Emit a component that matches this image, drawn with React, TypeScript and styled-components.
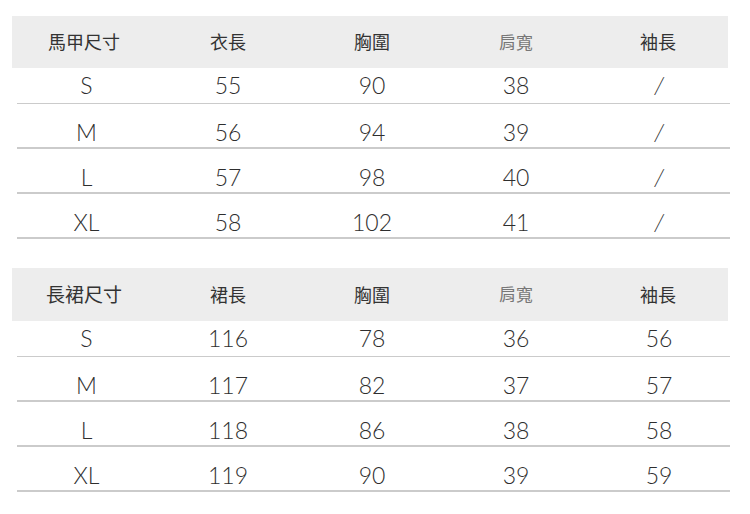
import styled, { createGlobalStyle } from "styled-components";

const GlobalStyle = createGlobalStyle`
  body {
    margin: 0;
    background: #ffffff;
  }
`;

type Table = {
  title: string;
  headers: string[];
  rows: string[][];
};

const tables: Table[] = [
  {
    title: "馬甲尺寸",
    headers: ["衣長", "胸圍", "肩寬", "袖長"],
    rows: [
      ["S", "55", "90", "38", "/"],
      ["M", "56", "94", "39", "/"],
      ["L", "57", "98", "40", "/"],
      ["XL", "58", "102", "41", "/"],
    ],
  },
  {
    title: "長裙尺寸",
    headers: ["裙長", "胸圍", "肩寬", "袖長"],
    rows: [
      ["S", "116", "78", "36", "56"],
      ["M", "117", "82", "37", "57"],
      ["L", "118", "86", "38", "58"],
      ["XL", "119", "90", "39", "59"],
    ],
  },
];

export default function App() {
  return (
    <>
      <GlobalStyle />
      <Page>
        {tables.map((t, ti) => (
          <SizeTable key={t.title}>
            <HeaderRow $tall={ti === 1}>
              <HeadCell $big={ti === 1}>{t.title}</HeadCell>
              {t.headers.map((h) => (
                <HeadCell key={h} $muted={h === "肩寬"}>
                  {h}
                </HeadCell>
              ))}
            </HeaderRow>
            {t.rows.map((r, i) => (
              <DataRow key={r[0]} $first={i === 0}>
                {r.map((v, j) => (
                  <Cell key={j} $slash={v === "/"}>
                    {v}
                  </Cell>
                ))}
              </DataRow>
            ))}
          </SizeTable>
        ))}
      </Page>
    </>
  );
}

const Page = styled.div`
  width: 750px;
  height: 514px;
  padding: 16px 0 0 12px;
  box-sizing: border-box;
  display: flex;
  flex-direction: column;
  gap: 29px;
  overflow: hidden;
`;

const SizeTable = styled.div`
  width: 720px;
  display: flex;
  flex-direction: column;
`;

const HeaderRow = styled.div<{ $tall?: boolean }>`
  width: 716px;
  height: ${(p) => (p.$tall ? 53 : 52)}px;
  background: #ededed;
  display: grid;
  grid-template-columns: repeat(4, 144px) 140px;
  align-items: center;
`;

const HeadCell = styled.div<{ $muted?: boolean; $big?: boolean }>`
  text-align: center;
  font-family: "Noto Sans CJK TC", "Noto Sans CJK SC", sans-serif;
  font-size: ${(p) => (p.$muted ? 17 : p.$big ? 19 : 18)}px;
  color: ${(p) => (p.$muted ? "#777777" : "#333333")};
  line-height: 1;
  margin-top: -2px;
`;

const DataRow = styled.div<{ $first?: boolean }>`
  margin-left: 5px;
  width: 713px;
  display: grid;
  grid-template-columns: 139px repeat(3, 144px) 142px;
  padding-top: ${(p) => (p.$first ? 2 : 13)}px;
  height: ${(p) => (p.$first ? 33 : 30)}px;
  border-bottom: ${(p) => (p.$first ? "1px" : "2px")} solid #cbcbcb;
`;

const Cell = styled.div<{ $slash?: boolean }>`
  text-align: center;
  font-family: Lato, Roboto, "Liberation Sans", sans-serif;
  font-weight: 300;
  font-size: 23px;
  line-height: 30px;
  color: #2e2e2e;
  ${(p) => p.$slash && "font-style: italic; font-size: 24px;"}
`;
